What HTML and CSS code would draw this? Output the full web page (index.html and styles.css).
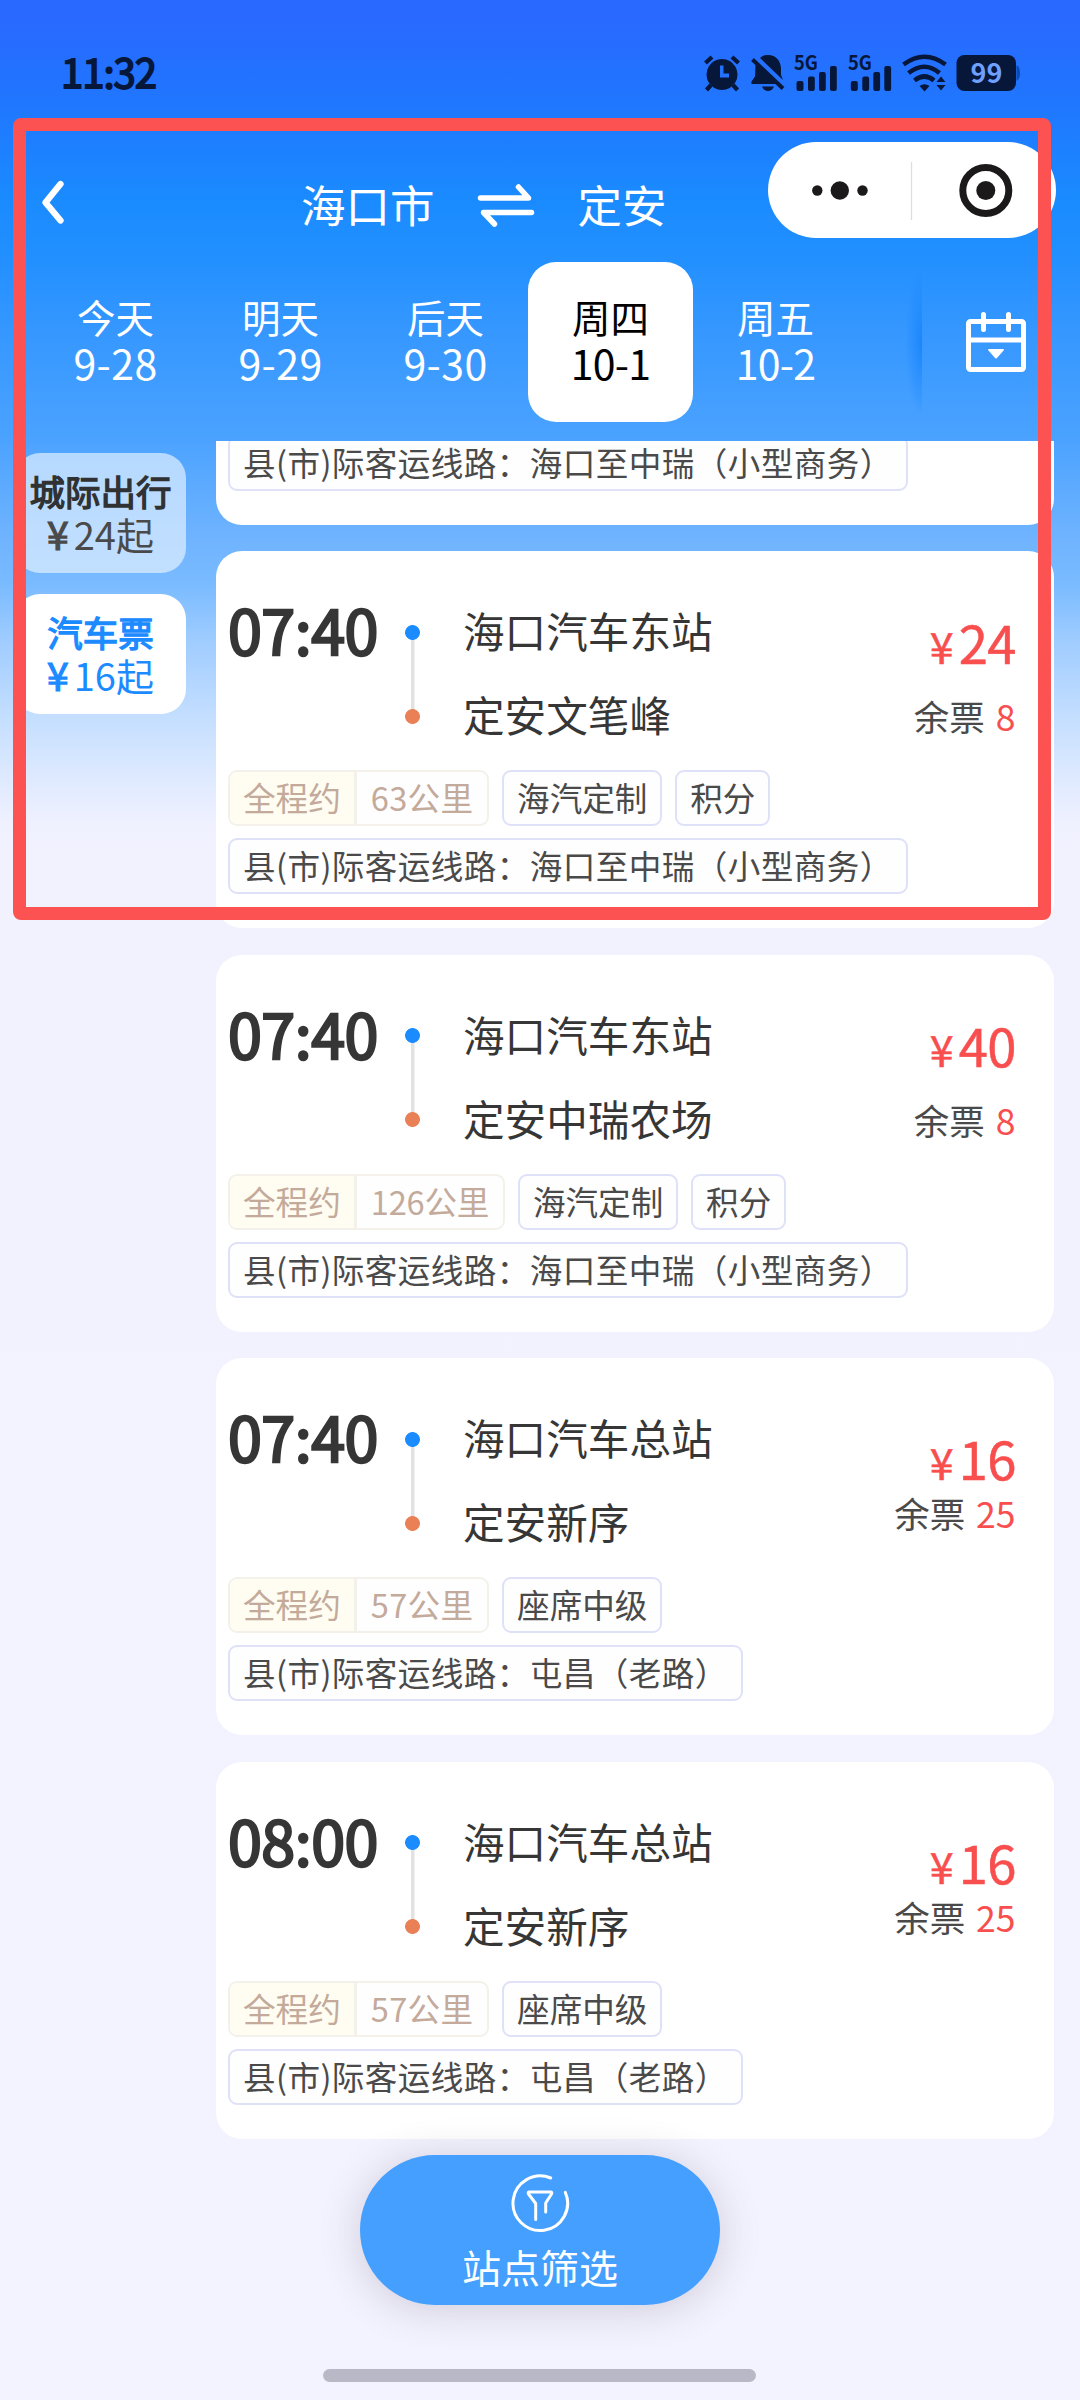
FILE: index.html
```html
<!DOCTYPE html>
<html lang="zh-CN">
<head>
<meta charset="utf-8">
<title>海口市 - 定安</title>
<link rel="stylesheet" href="styles.css">
</head>
<body>
<div class="screen">
  <header class="status">
    <span class="clock">11:32</span>
    <svg class="status-icons" width="318" height="40" viewBox="703 53 318 40">
      <g fill="#06173a">
        <path fill-rule="evenodd" d="M722 59a15.5 15.5 0 1 0 .01 0zM720 65.500h3.500v8h5.500v4h-9z"/>
        <path d="M705.500 63l6.500-6M738.500 63l-6.500-6M711 85l-4.500 5M733 85l4.500 5" stroke="#06173a" stroke-width="4.200" fill="none"/>
        <path d="M760 58c2-2 5-3 8-3 8 0 13 6 13 14v6l2 5zM755.500 64.500l23 19.500h-27v-2.500l3.500-5zM762 86.500h12q-2 4.500-6 4.500t-6-4.500z"/>
        <path d="M752.500 59.500l30.500 29" stroke="#06173a" stroke-width="4"/>
        <g id="bars"><rect x="796.500" y="81" width="7" height="10" rx="2"/><rect x="808" y="76.500" width="6.800" height="14.500" rx="2"/><rect x="819" y="72" width="6.800" height="19" rx="2"/><rect x="830" y="66" width="6.800" height="25" rx="2"/></g>
        <use href="#bars" x="54.300"/>
        <text class="net" x="794" y="69.500" textLength="24" lengthAdjust="spacingAndGlyphs">5G</text>
        <text class="net" x="848" y="69.500" textLength="24" lengthAdjust="spacingAndGlyphs">5G</text>
        <path d="M919.500 86q5-3.500 10 0l-5 5.500zM936.500 82l4.500-5.500 4.500 5.500zM936.500 85l4.500 5.500 4.500-5.500z"/>
        <path d="M903.500 64.500q21-15.500 42 0M908.500 73q16-12.500 31 0M914.500 80.500q10-8 19.500 0" fill="none" stroke="#06173a" stroke-width="4.600"/>
        <rect x="956.500" y="55" width="59.500" height="36" rx="8"/>
        <path d="M1016.500 65q3.500 2 3.500 8t-3.500 8z" fill="#0c4bae"/>
      </g>
      <text class="battery" x="986.500" y="83" text-anchor="middle">99</text>
    </svg>
  </header>

  <nav class="titlebar">
    <svg class="back" width="24" height="44" viewBox="0 0 24 44"><path d="M19.500 4L4.500 22.500l15 18" fill="none" stroke="#fff" stroke-width="6.300" stroke-linecap="round" stroke-linejoin="round"/></svg>
    <span class="city from">海口市</span>
    <svg class="swap" width="58" height="44" viewBox="0 0 58 44"><path d="M3.500 15h48L41.500 4M54.500 29.500h-48L17.500 41" fill="none" stroke="#fff" stroke-width="5.500" stroke-linecap="round" stroke-linejoin="round"/></svg>
    <span class="city">定安</span>
    <div class="capsule">
      <svg width="288" height="96" viewBox="0 0 288 96"><g fill="#1c191a"><circle cx="49.300" cy="48.500" r="5.200"/><circle cx="71.800" cy="48.500" r="9.200"/><circle cx="94.500" cy="48.500" r="5.200"/><circle cx="217.800" cy="48.500" r="9.500"/></g><circle cx="217.800" cy="48.500" r="23" fill="none" stroke="#1c191a" stroke-width="7"/><path d="M143.500 20v58" stroke="#dedede" stroke-width="1.300"/></svg>
    </div>
  </nav>

  <div class="dates">
    <div class="day"><span>今天</span><span class="date">9-28</span></div>
    <div class="day"><span>明天</span><span class="date">9-29</span></div>
    <div class="day"><span>后天</span><span class="date">9-30</span></div>
    <div class="day active"><span>周四</span><span class="date narrow">10-1</span></div>
    <div class="day"><span>周五</span><span class="date narrow">10-2</span></div>
    <div class="edge"></div>
    <svg class="calendar" width="60" height="60" viewBox="0 0 60 60"><g fill="none" stroke="#fff" stroke-width="5"><rect x="2.500" y="9.500" width="55" height="48" rx="2"/><path d="M2 28h56"/><path d="M17.500 2.500v15M42.500 2.500v15" stroke-linecap="round"/></g><path d="M22 38q0-1 1-1h14q1 0 1 1l-7 8q-1 1-2 0z" fill="#fff"/></svg>
  </div>

  <div class="content">
    <aside class="types">
      <div class="type"><b>城际出行</b><span><i>¥</i>24起</span></div>
      <div class="type active"><b>汽车票</b><span><i>¥</i>16起</span></div>
    </aside>
    <main class="list">
      <article class="card peek">
        <div class="tags"><span class="tag route">县(市)际客运线路：海口至中瑞（小型商务）</span></div>
      </article>
      <article class="card">
        <div class="trip">
          <span class="time">07:40</span>
          <span class="track"></span>
          <div class="stations"><span>海口汽车东站</span><span>定安文笔峰</span></div>
          <div class="fare"><span class="price"><i>¥</i>24</span><span class="left">余票 <em>8</em></span></div>
        </div>
        <div class="tags"><span class="tag distance"><b>全程约</b><span>63公里</span></span><span class="tag">海汽定制</span><span class="tag">积分</span></div>
        <div class="tags"><span class="tag route">县(市)际客运线路：海口至中瑞（小型商务）</span></div>
      </article>
      <article class="card">
        <div class="trip">
          <span class="time">07:40</span>
          <span class="track"></span>
          <div class="stations"><span>海口汽车东站</span><span>定安中瑞农场</span></div>
          <div class="fare"><span class="price"><i>¥</i>40</span><span class="left">余票 <em>8</em></span></div>
        </div>
        <div class="tags"><span class="tag distance"><b>全程约</b><span class="long">126公里</span></span><span class="tag">海汽定制</span><span class="tag">积分</span></div>
        <div class="tags"><span class="tag route">县(市)际客运线路：海口至中瑞（小型商务）</span></div>
      </article>
      <article class="card">
        <div class="trip">
          <span class="time">07:40</span>
          <span class="track"></span>
          <div class="stations"><span>海口汽车总站</span><span>定安新序</span></div>
          <div class="fare compact"><span class="price"><i>¥</i>16</span><span class="left">余票 <em>25</em></span></div>
        </div>
        <div class="tags"><span class="tag distance"><b>全程约</b><span>57公里</span></span><span class="tag">座席中级</span></div>
        <div class="tags"><span class="tag route">县(市)际客运线路：屯昌（老路）</span></div>
      </article>
      <article class="card">
        <div class="trip">
          <span class="time">08:00</span>
          <span class="track"></span>
          <div class="stations"><span>海口汽车总站</span><span>定安新序</span></div>
          <div class="fare compact"><span class="price"><i>¥</i>16</span><span class="left">余票 <em>25</em></span></div>
        </div>
        <div class="tags"><span class="tag distance"><b>全程约</b><span>57公里</span></span><span class="tag">座席中级</span></div>
        <div class="tags"><span class="tag route">县(市)际客运线路：屯昌（老路）</span></div>
      </article>
    </main>
  </div>

  <button class="filter">
    <svg width="60" height="60" viewBox="0 0 60 60"><g fill="none" stroke="#fff" stroke-width="3" stroke-linecap="round" stroke-linejoin="round"><path d="M40.700 5A27.300 27.300 0 1 0 55.300 19.300"/><path d="M25.700 46.500V30.500L18.500 21q-1-2 1-2h21q2 0 1 2L35.700 30v9"/></g></svg>
    <span>站点筛选</span>
  </button>
  <div class="home"></div>
  <div class="highlight"></div>
</div>
</body>
</html>
```
FILE: styles.css
```css
* { box-sizing: border-box; }
body { margin: 0; font-family: "Noto Sans CJK SC", sans-serif; }
i, em { font-style: normal; }

.screen {
  position: relative;
  width: 1080px;
  height: 2400px;
  overflow: hidden;
  display: flex;
  flex-direction: column;
  background: linear-gradient(#2969ff 0, #2969ff 20px, #2076ff 100px, #1a8bff 200px, #208fff 250px, #3597ff 330px, #4aa2ff 435px, #70b4ff 540px, #7abbff 585px, #9fccff 640px, #c3deff 715px, #dde9ff 775px, #f0f1ff 825px, #f2f2ff 850px, #f2f3fe 100%);
}

/* status bar */
.status { height: 131.300px; flex: none; display: flex; justify-content: space-between; padding: 0 59px 0 61px; }
.clock { font-size: 40px; line-height: 60px; margin-top: 41px; letter-spacing: -1px; color: #06173a; -webkit-text-stroke: 1.800px #06173a; }
.status-icons { margin-top: 53px; overflow: visible; }
.net { font-size: 20px; font-weight: 700; }
.battery { font-size: 27px; font-weight: 700; fill: #6f9fff; }

/* title bar */
.titlebar { height: 131px; flex: none; display: flex; padding-left: 41px; color: #fff; }
.back { margin-top: 49px; }
.city { font-size: 44.500px; line-height: 60px; margin-top: 42.500px; }
.from { margin-left: 236px; }
.swap { margin: 52px 43px 0 42px; }
.capsule { height: 96px; width: 288px; margin: 11px 24px 0 auto; border-radius: 48px; background: #fff; }

/* date tabs */
.dates { height: 179.200px; flex: none; display: flex; padding-left: 33px; color: #fff; }
.day { width: 165px; height: 160px; padding-top: 31px; border-radius: 28px; display: flex; flex-direction: column; align-items: center; font-size: 38.500px; line-height: 46px; }
.date { font-size: 41px; letter-spacing: .4px; }
.date.narrow { letter-spacing: -.8px; }
.day.active { background: #fff; color: #000; }
.edge { width: 20px; height: 150px; margin: 5px 44px 0 44px; background: radial-gradient(ellipse 17px 75px at 100% 50%, #1a86fd, rgba(26, 134, 253, .5) 45%, rgba(26, 134, 253, 0)); }
.calendar { margin-top: 50px; }

/* ticket types and trips */
.content { flex: 1; min-height: 0; display: flex; gap: 30px; padding-left: 15px; }
.types { width: 171px; display: flex; flex-direction: column; gap: 21px; padding-top: 12px; }
.type { height: 120px; padding-top: 17px; border-radius: 25px; background: rgba(225, 240, 255, .7); display: flex; flex-direction: column; align-items: center; font-size: 38px; line-height: 42px; color: #4a4a4a; }
.type b { font-size: 35.500px; font-weight: 400; color: #303133; -webkit-text-stroke: 1.300px currentColor; }
.type i { font-size: 39px; margin-right: 5px; -webkit-text-stroke: 1.200px currentColor; }
.type.active, .type.active b { color: #1c8bff; }
.type.active { background: #fff; }

.list { width: 837.500px; overflow: hidden; display: flex; flex-direction: column; gap: 26.700px; }
.card { flex: none; height: 376.800px; padding: 36px 38px 0 12px; border-radius: 26px; background: #fff; }
.card.peek { height: 83.300px; padding-top: 0; border-radius: 0 0 26px 26px; }
.peek .tags { margin-top: -6.800px; }
.trip { display: flex; height: 183px; }
.time { width: 177px; font-size: 61px; line-height: 84px; letter-spacing: -.500px; color: #363636; -webkit-text-stroke: 2.400px #363636; }
.track { width: 15px; height: 99px; margin-top: 37.500px; background:
  radial-gradient(circle at 50% 7.500px, #1a8cff 7px, transparent 7.800px),
  radial-gradient(circle at 50% 91.500px, #ea8055 7px, transparent 7.800px),
  linear-gradient(#e2e2e2, #e2e2e2) center / 3.500px 84px no-repeat; }
.stations { margin-left: 43px; padding-top: 1px; display: flex; flex-direction: column; font-size: 41.600px; line-height: 84px; color: #363636; }
.fare { margin-left: auto; display: flex; flex-direction: column; align-items: flex-end; gap: 17.500px; padding-top: 27.500px; }
.fare.compact { gap: 0; padding-top: 37px; }
.compact .left { margin-top: -2px; }
.price { font-size: 52.500px; line-height: 53px; letter-spacing: -.8px; color: #f84e4e; -webkit-text-stroke: .5px currentColor; }
.price i { font-size: 43px; margin-right: 6px; }
.left { font-size: 35.500px; line-height: 53px; color: #4a4a4a; }
.left em { margin-left: 3px; color: #f84e4e; }

.tags { display: flex; gap: 12.800px; margin-bottom: 12px; }
.tag { height: 56px; padding: 0 13px; border: 2.500px solid #dfe1f8; border-radius: 9px; font-size: 32.600px; line-height: 49px; white-space: nowrap; color: #4a4a4a; background: #fefeff; }
.route { letter-spacing: .42px; }
.distance { display: flex; padding: 0; border-color: #f3f1ea; color: #c3aa9b; overflow: hidden; }
.distance b { font-weight: 400; padding: 0 13px; background: #fffdf2; border-right: 3px solid #f3f1ea; }
.distance span { padding: 0 14px; letter-spacing: .3px; }
.distance .long { letter-spacing: -.2px; }

/* floating filter button */
.filter { position: absolute; left: 360px; top: 2155.300px; width: 360px; height: 150px; padding: 18px 0 0; border: 0; border-radius: 75px; background: #449fff; box-shadow: 0 4px 40px rgba(90, 60, 90, .22); color: #fff; font-family: inherit; font-size: 39px; line-height: 56px; display: flex; flex-direction: column; align-items: center; }
.filter svg { flex: none; }
.filter span { margin-top: 5px; }
.home { position: absolute; left: 323px; top: 2369px; width: 433px; height: 12.500px; border-radius: 7px; background: #b8b8c6; }

/* annotation frame */
.highlight { position: absolute; left: 13px; top: 117.500px; width: 1038px; height: 802.500px; border: 13.500px solid #fc5252; border-radius: 8px; }
```
